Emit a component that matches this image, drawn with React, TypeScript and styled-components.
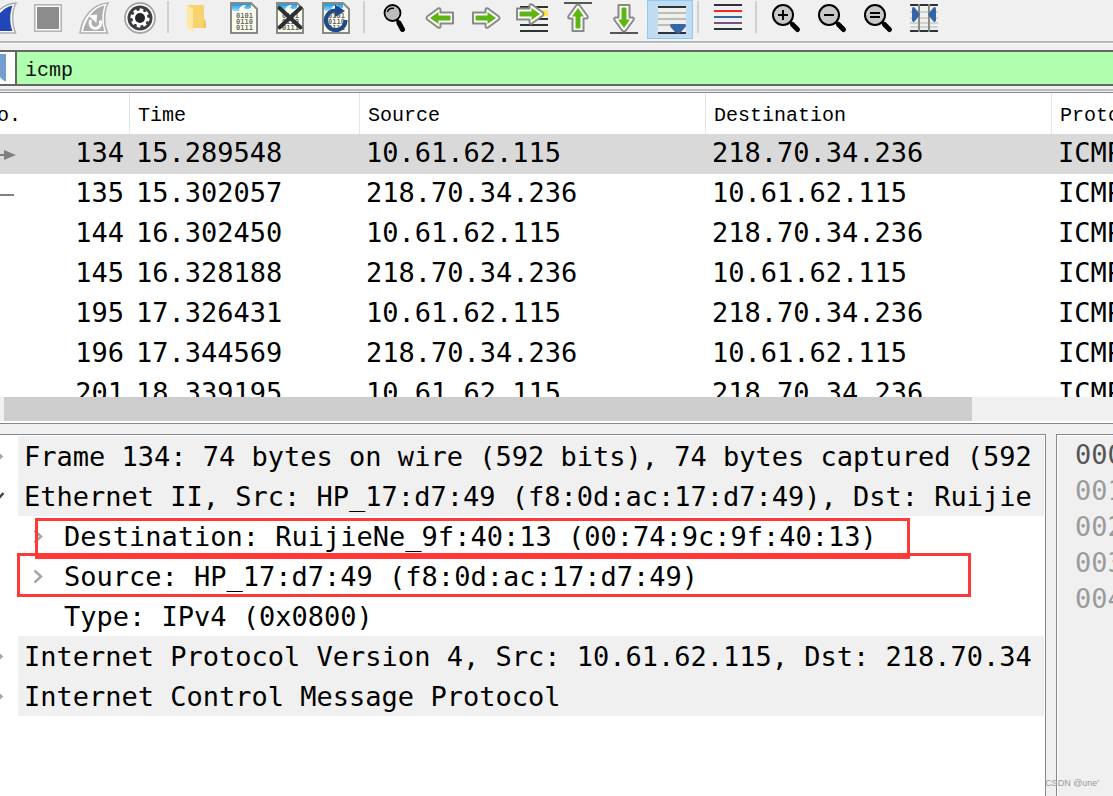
import React from "react";
import styled, { createGlobalStyle } from "styled-components";

const MONO = `"DejaVu Sans Mono", monospace`;
const UI = `"Liberation Mono", monospace`;
const LINE = "#828790";

const GlobalStyle = createGlobalStyle`
  * { box-sizing: border-box; }
  body { margin: 0; background: #f0f0f0; color: #000; overflow: hidden; }
  button { font: inherit; color: inherit; }
`;

const Window = styled.main`
  height: 100vh;
  display: flex;
  flex-direction: column;
  overflow: hidden;
  position: relative;
  background: #f0f0f0;
`;

const Toolbar = styled.div`
  display: flex;
  flex: none;
  height: 43px;
  padding-bottom: 2px;
  overflow: hidden;
  border-bottom: 2px solid #b9b9b9;
`;

const ToolButton = styled.button<{ $active?: boolean; $clipped?: boolean }>`
  flex: none;
  width: 46px;
  height: 39px;
  padding: 0;
  margin: 0 0 0 ${(p) => (p.$clipped ? "-21px" : "0")};
  border: 0;
  background: ${(p) => (p.$active ? "#c0dcf3" : "transparent")};
  box-shadow: ${(p) => (p.$active ? "inset 0 0 0 1px #90c8f6" : "none")};
  svg { display: block; }
`;

const Separator = styled.span`
  flex: none;
  width: 2px;
  height: 32px;
  margin: 1px 6px 0 4px;
  background: #d0d0d0;
`;

const FilterBar = styled.form`
  display: flex;
  flex: none;
  margin: 0;
  padding: 6px 0 3px;
  border-top: 1px solid #fff;
  border-bottom: 2px solid #b9b9b9;
`;

const BookmarkButton = styled.button`
  flex: none;
  width: 15px;
  height: 36px;
  padding: 0;
  border: solid #666;
  border-width: 2px 0;
  background: #fff;
  svg { display: block; }
`;

const FilterInput = styled.input`
  flex: 1;
  min-width: 0;
  height: 36px;
  padding: 4px 8px 0;
  border: 2px solid #666;
  border-right: 0;
  border-radius: 0;
  outline: 0;
  background: #afffaf;
  font: 20px ${UI};
  color: #111;
`;

const ListPane = styled.section`
  flex: none;
  margin-top: 1px;
  border-top: 1px solid ${LINE};
  border-bottom: 1px solid ${LINE};
  padding-bottom: 2px;
  background: #fff;
`;

const ListViewport = styled.div`
  height: 304px;
  overflow: hidden;
`;

const PacketTable = styled.table`
  width: 100%;
  min-width: 1113px;
  table-layout: fixed;
  border-collapse: separate;
  border-spacing: 0;
`;

const HeadCell = styled.th<{ $width?: number; $first?: boolean }>`
  width: ${(p) => (p.$width ? `${p.$width}px` : "auto")};
  height: 41px;
  padding: 4px 0 0 ${(p) => (p.$first ? "0" : "8px")};
  border-right: 1px solid #e5e5e5;
  font: 20px ${UI};
  text-align: left;
  white-space: nowrap;
  overflow: hidden;
  text-indent: ${(p) => (p.$first ? "-3px" : "0")};
  &:last-child { border-right: 0; }
`;

const PacketRow = styled.tr<{ $selected?: boolean }>`
  background: ${(p) => (p.$selected ? "#d9d9d9" : "#fff")};
`;

const Cell = styled.td`
  height: 40px;
  padding: 0 0 2px 6px;
  font: 27px/38px ${MONO};
  white-space: nowrap;
  overflow: hidden;
  &:first-child { padding: 0 6px 2px 0; }
`;

const NumberCell = styled.div`
  display: flex;
  align-items: center;
  justify-content: space-between;
  svg { margin-top: 4px; }
`;

const ScrollTrack = styled.div`
  height: 24px;
  padding-left: 4px;
  background: #f0f0f0;
`;

const ScrollThumb = styled.div`
  width: 87.3%;
  height: 24px;
  background: #cdcdcd;
`;

const Lower = styled.div`
  flex: 1;
  min-height: 0;
  display: flex;
  gap: 10px;
  padding-top: 10px;
`;

const TreePane = styled.section`
  position: relative;
  flex: 1;
  min-width: 0;
  padding: 1px 1px 0 0;
  border-top: 1px solid ${LINE};
  border-right: 1px solid ${LINE};
  background: #fff;
`;

const Tree = styled.ul`
  margin: 0;
  padding: 0;
  list-style: none;
`;

const TreeRow = styled.li<{ $child?: boolean }>`
  display: flex;
  height: 40px;
  overflow: hidden;
  padding-left: ${(p) => (p.$child ? "28px" : "0")};
`;

const Expander = styled.button<{ $wide?: boolean }>`
  flex: none;
  width: ${(p) => (p.$wide ? "30px" : "18px")};
  padding: 0;
  border: 0;
  background: none;
  svg { display: block; }
`;

const TreeText = styled.span<{ $shaded?: boolean }>`
  flex: 1;
  min-width: 0;
  padding-left: 6px;
  background: ${(p) => (p.$shaded ? "#f0f0f0" : "transparent")};
  font: 27px/42px ${MONO};
  white-space: nowrap;
  overflow: hidden;
`;

const Highlight = styled.div<{ $x: number; $y: number; $w: number; $h: number }>`
  position: absolute;
  left: ${(p) => p.$x}px;
  top: ${(p) => p.$y}px;
  width: ${(p) => p.$w}px;
  height: ${(p) => p.$h}px;
  border: 3px solid #ff3838;
  pointer-events: none;
`;

const BytesPane = styled.section`
  flex: none;
  width: 57px;
  overflow: hidden;
  border-top: 1px solid ${LINE};
  border-left: 1px solid ${LINE};
  box-shadow: inset 1px 1px 0 #fff;
  padding: 2px 0 0 18px;
`;

const Offset = styled.div<{ $current?: boolean }>`
  font: 27px/36px ${MONO};
  color: ${(p) => (p.$current ? "#555" : "#9b9b9b")};
`;

const Watermark = styled.span`
  position: absolute;
  right: 14px;
  bottom: 7px;
  font: 9px/12px "Liberation Sans", sans-serif;
  color: #999;
`;

const Icon = ({ children }: { children: React.ReactNode }) => (
  <svg width="46" height="39" viewBox="0 0 46 39" fill="none" aria-hidden="true">
    {children}
  </svg>
);

const FIN = "M9 33C11 18 21 4 37 3C32.500 12 32.500 24 36.500 33Z";
const FIN_INNER = "M12 31C15 19 22 8 33.500 5.500C30.500 14 30.500 23 33.500 31Z";

const Fin = ({ color, restart }: { color: string; restart?: boolean }) => (
  <Icon>
    <path d={FIN} fill="#fff" stroke="#b0b0b0" strokeWidth="1.6" />
    <path d={FIN_INNER} fill={color} />
    {restart && (
      <>
        <path d="M29 20.500A5.300 5.300 0 1 1 20 20" stroke="#fff" strokeWidth="3" />
        <path d="M17.500 15.500L26 14.500L25.500 23Z" fill="#fff" />
      </>
    )}
  </Icon>
);

const Stop = () => (
  <Icon>
    <rect x="9.800" y="4.800" width="26.400" height="26.400" fill="#fff" stroke="#b5b5b5" strokeWidth="1.600" />
    <rect x="12" y="7" width="22" height="22" fill="#8c8c8c" />
  </Icon>
);

const Gear = () => (
  <Icon>
    <circle cx="23" cy="18" r="15" fill="#fff" stroke="#a6a6a6" strokeWidth="1.800" />
    <circle cx="23" cy="18" r="12.500" fill="#3b3d40" />
    <g fill="#fff">
      {[0, 45, 90, 135].map((a) => (
        <rect key={a} x="21.200" y="8.500" width="3.600" height="19" transform={`rotate(${a + 10} 23 18)`} />
      ))}
      <circle cx="23" cy="18" r="7.500" />
    </g>
    <circle cx="23" cy="18" r="5" fill="#222426" />
  </Icon>
);

const Folder = () => (
  <Icon>
    <path d="M13 5H29V22L31 24V28H13Z" fill="#f6d36f" />
    <path d="M29 19L30.800 21V28H28Z" fill="#f0c65a" />
    <path d="M12 5L18 9V32L12 28Z" fill="#ffe9a2" />
  </Icon>
);

const Doc = ({ children }: { children?: React.ReactNode }) => (
  <Icon>
    <defs>
      <linearGradient id="sky" x1="0" y1="0" x2="0" y2="1">
        <stop offset="0" stopColor="#1d97dc" />
        <stop offset="1" stopColor="#a6dcf6" />
      </linearGradient>
    </defs>
    <path d="M10 3H30L36 9V33H10Z" fill="#fdfdee" />
    <path d="M11 4H31V7Q27 10 25 9Q20 6 18 11Q14 12 11 10Z" fill="url(#sky)" />
    <path d="M18 10Q19 5 25 5L22 9Z" fill="#fff" />
    <path d="M30 3V9H36Z" fill="#f4f4f0" />
    <path d="M10 3H30L36 9V33H10Z" stroke="#888a85" strokeWidth="2" />
    <g fill="#6b6d68" fontFamily="DejaVu Sans Mono, monospace" fontSize="7" fontWeight="700">
      <text x="15" y="18">0101</text>
      <text x="15" y="24">0110</text>
      <text x="15" y="30">0111</text>
    </g>
    {children}
  </Icon>
);

const Lens = ({ children }: { children?: React.ReactNode }) => (
  <Icon>
    <path d="M26.500 21.500L29 24" stroke="#000" strokeWidth="3" />
    <path d="M29.500 24.500L34.500 29.500" stroke="#000" strokeWidth="5" strokeLinecap="round" />
    <circle cx="20" cy="15" r="10" fill="#c8c8c8" stroke="#000" strokeWidth="2" />
    <path d={`${children}`} stroke="#000" strokeWidth="2" />
  </Icon>
);

const Find = () => (
  <Icon>
    <path d="M25.500 19L28 23" stroke="#000" strokeWidth="3" />
    <path d="M28 23L31.500 29.500" stroke="#000" strokeWidth="5" strokeLinecap="round" />
    <circle cx="21.500" cy="13" r="8" fill="#bdbdbd" stroke="#000" strokeWidth="1.800" />
    <path d="M16.500 12C17.500 9 20 8 23 8.500" stroke="#000" strokeWidth="1.500" />
  </Icon>
);

/* A right-pointing arrow centred on 23,18; the transform turns or moves it. */
const Arrow = ({ transform }: { transform?: string }) => (
  <g transform={transform}>
    <path
      d="M10 12.500H22.500V10Q22.500 7.500 25 8.500L35.500 16.200Q37.500 18 35.500 19.800L25 27.500Q22.500 28.500 22.500 26V23.500H10Z"
      fill="#fff"
      stroke="#888a85"
      strokeWidth="2"
      strokeLinejoin="round"
    />
    <path d="M12.500 15.500H24.500V12L33 18L24.500 24V20.500H12.500Z" fill="#5cb512" />
  </g>
);

const Lines = ({ x, rows }: { x: number; rows: [number, string][] }) => (
  <>
    {rows.map(([y, fill]) => (
      <rect key={y} x={x} y={y} width="28" height="2" fill={fill} />
    ))}
  </>
);

const DARK = "#2e3436";
const PALE = "#babdb6";

const TOOLS: ({ label: string; icon: React.ReactNode; active?: boolean; clipped?: boolean } | null)[] = [
  { label: "Start capture", icon: <Fin color="#2246b8" />, clipped: true },
  { label: "Stop capture", icon: <Stop /> },
  { label: "Restart capture", icon: <Fin color="#adadad" restart /> },
  { label: "Capture options", icon: <Gear /> },
  null,
  { label: "Open file", icon: <Folder /> },
  { label: "Save file", icon: <Doc /> },
  {
    label: "Close file",
    icon: (
      <Doc>
        <path d="M12.500 8L33.500 27.500M33.500 8L12.500 27.500" stroke="#2b3034" strokeWidth="4" strokeLinecap="round" />
      </Doc>
    ),
  },
  {
    label: "Reload file",
    icon: (
      <Doc>
        <path d="M32.500 20A9.800 9.800 0 1 1 23 10.500" stroke="#204a87" strokeWidth="4" />
        <path d="M22 4.500L32 11L22 17Z" fill="#204a87" />
      </Doc>
    ),
  },
  null,
  { label: "Find packet", icon: <Find /> },
  { label: "Previous packet", icon: <Icon><Arrow transform="rotate(180 23 18)" /></Icon> },
  { label: "Next packet", icon: <Icon><Arrow /></Icon> },
  {
    label: "Go to packet",
    icon: (
      <Icon>
        <Lines x={11} rows={[[6, DARK], [18, DARK], [24, DARK], [30, DARK]]} />
        <rect x="30" y="10" width="9" height="6" fill="#fce94f" />
        <Arrow transform="translate(-2 -4)" />
      </Icon>
    ),
  },
  {
    label: "First packet",
    icon: (
      <Icon>
        <Lines x={9} rows={[[2, "#555753"]]} />
        <Arrow transform="rotate(-90 23 18)" />
      </Icon>
    ),
  },
  {
    label: "Last packet",
    icon: (
      <Icon>
        <Lines x={9} rows={[[32, "#555753"]]} />
        <Arrow transform="rotate(90 23 18)" />
      </Icon>
    ),
  },
  {
    label: "Auto scroll",
    active: true,
    icon: (
      <Icon>
        <rect x="11" y="6" width="28" height="28" fill="#eeeeec" />
        <Lines x={11} rows={[[6, DARK], [12, PALE], [18, PALE], [24, PALE], [32, DARK]]} />
        <path d="M25 24H37Q40 24 38.500 27L34 32Q31 35 28 32L23.500 27Q22 24 25 24Z" fill="#3465a4" />
      </Icon>
    ),
  },
  null,
  {
    label: "Colorize",
    icon: (
      <Icon>
        <Lines x={9} rows={[[4, DARK], [10, "#ef2929"], [16, "#3465a4"], [22, "#75507b"], [28, DARK]]} />
      </Icon>
    ),
  },
  null,
  { label: "Zoom in", icon: <Lens>M15 15H25M20 10V20</Lens> },
  { label: "Zoom out", icon: <Lens>M15 15H25</Lens> },
  { label: "Normal size", icon: <Lens>M15 13H25M15 17H25</Lens> },
  {
    label: "Resize columns",
    icon: (
      <Icon>
        <Lines x={9} rows={[[4, DARK], [11, "#d0d2cc"], [17, "#d0d2cc"], [22, "#d0d2cc"], [26, "#d0d2cc"], [30, DARK]]} />
        <path d="M18 4V32M28 4V32" stroke="#888a85" strokeWidth="2" />
        <path d="M11 8.500Q12 6 14 8L19 14.500L14 21Q12 23 11 20.500Z" fill="#3465a4" />
        <path d="M35 8.500Q34 6 32 8L27 14.500L32 21Q34 23 35 20.500Z" fill="#3465a4" />
      </Icon>
    ),
  },
];

const A = "10.61.62.115";
const B = "218.70.34.236";
const PACKETS: [number, string, string, string][] = [
  [134, "15.289548", A, B],
  [135, "15.302057", B, A],
  [144, "16.302450", A, B],
  [145, "16.328188", B, A],
  [195, "17.326431", A, B],
  [196, "17.344569", B, A],
  [201, "18.339195", A, B],
];

const Marker = ({ kind }: { kind: number }) => (
  <svg width="18" height="12" viewBox="0 0 18 12" fill="#808080" aria-hidden="true">
    {kind === 0 && <path d="M0 5H4V1L16 6L4 11V7H0Z" />}
    {kind === 1 && <rect y="5" width="14" height="2" />}
  </svg>
);

type Node = { text: string; child?: boolean; mark: "closed" | "open" | "none" };
const NODES: Node[] = [
  { text: "Frame 134: 74 bytes on wire (592 bits), 74 bytes captured (592", mark: "closed" },
  { text: "Ethernet II, Src: HP_17:d7:49 (f8:0d:ac:17:d7:49), Dst: Ruijie", mark: "open" },
  { text: "Destination: RuijieNe_9f:40:13 (00:74:9c:9f:40:13)", child: true, mark: "closed" },
  { text: "Source: HP_17:d7:49 (f8:0d:ac:17:d7:49)", child: true, mark: "closed" },
  { text: "Type: IPv4 (0x0800)", child: true, mark: "none" },
  { text: "Internet Protocol Version 4, Src: 10.61.62.115, Dst: 218.70.34", mark: "closed" },
  { text: "Internet Control Message Protocol", mark: "closed" },
];

const Chevron = ({ node }: { node: Node }) => (
  <svg width="18" height="40" viewBox="0 0 18 40" fill="none" strokeWidth="2.500" aria-hidden="true">
    {node.mark === "open" && <path d="M-8 17L-2 23L3.500 17" stroke="#444" />}
    {node.mark === "closed" && (
      <path d={node.child ? "M6.500 14.500L13 20.500L6.500 26.500" : "M-5 14.500L1.500 20.500L-5 26.500"} stroke="#a6a6a6" />
    )}
  </svg>
);

export default function App() {
  return (
    <Window>
      <GlobalStyle />
      <Toolbar role="toolbar" aria-label="Main toolbar">
        {TOOLS.map((t, i) =>
          t ? (
            <ToolButton key={t.label} type="button" aria-label={t.label} $active={t.active} $clipped={t.clipped}>
              {t.icon}
            </ToolButton>
          ) : (
            <Separator key={i} />
          )
        )}
      </Toolbar>
      <FilterBar onSubmit={(e) => e.preventDefault()}>
        <BookmarkButton type="button" aria-label="Filter bookmarks">
          <svg width="15" height="32" viewBox="0 0 15 32" aria-hidden="true">
            <path d="M0 2H6V29Q4 30 0 25Z" fill="#729fcf" />
          </svg>
        </BookmarkButton>
        <FilterInput aria-label="Display filter" defaultValue="icmp" spellCheck={false} />
      </FilterBar>
      <ListPane>
        <ListViewport>
          <PacketTable>
            <thead>
              <tr>
                <HeadCell $width={130} $first>o.</HeadCell>
                <HeadCell $width={230}>Time</HeadCell>
                <HeadCell $width={346}>Source</HeadCell>
                <HeadCell $width={346}>Destination</HeadCell>
                <HeadCell>Protocol</HeadCell>
              </tr>
            </thead>
            <tbody>
              {PACKETS.map(([no, time, src, dst], i) => (
                <PacketRow key={no} $selected={i === 0}>
                  <Cell>
                    <NumberCell>
                      <Marker kind={i} />
                      {no}
                    </NumberCell>
                  </Cell>
                  <Cell>{time}</Cell>
                  <Cell>{src}</Cell>
                  <Cell>{dst}</Cell>
                  <Cell>ICMP</Cell>
                </PacketRow>
              ))}
            </tbody>
          </PacketTable>
        </ListViewport>
        <ScrollTrack>
          <ScrollThumb />
        </ScrollTrack>
      </ListPane>
      <Lower>
        <TreePane>
          <Tree>
            {NODES.map((n) => (
              <TreeRow key={n.text} $child={n.child}>
                <Expander type="button" aria-label={`Toggle ${n.text.split(/[ :]/)[0]}`} $wide={n.child}>
                  <Chevron node={n} />
                </Expander>
                <TreeText $shaded={!n.child}>{n.text}</TreeText>
              </TreeRow>
            ))}
          </Tree>
          <Highlight $x={35} $y={83} $w={875} $h={41} />
          <Highlight $x={17} $y={118} $w={954} $h={44} />
        </TreePane>
        <BytesPane>
          {["0000", "0010", "0020", "0030", "0040"].map((o, i) => (
            <Offset key={o} $current={i === 0}>{o}</Offset>
          ))}
        </BytesPane>
      </Lower>
      <Watermark>CSDN @une'</Watermark>
    </Window>
  );
}
